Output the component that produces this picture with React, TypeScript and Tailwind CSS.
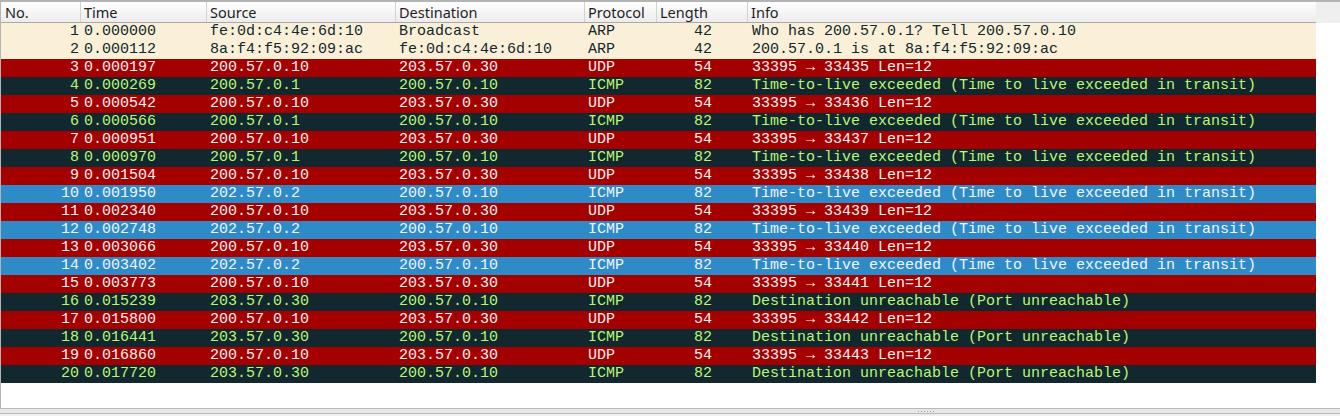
import React from "react";

type Kind = "arp" | "udp" | "icmp" | "blue";

const rowStyles: Record<Kind, string> = {
  arp: "bg-[#faf0d7] text-[#12272e]",
  udp: "bg-[#a40000] text-[#fff2f0]",
  icmp: "bg-[#12272e] text-[#b7f774]",
  blue: "bg-[#2f8bc7] text-[#f0f6ff]",
};

const TTL = "Time-to-live exceeded (Time to live exceeded in transit)";
const UNR = "Destination unreachable (Port unreachable)";

const rows: [number, string, string, string, string, number, string, Kind][] = [
  [1, "0.000000", "fe:0d:c4:4e:6d:10", "Broadcast", "ARP", 42, "Who has 200.57.0.1? Tell 200.57.0.10", "arp"],
  [2, "0.000112", "8a:f4:f5:92:09:ac", "fe:0d:c4:4e:6d:10", "ARP", 42, "200.57.0.1 is at 8a:f4:f5:92:09:ac", "arp"],
  [3, "0.000197", "200.57.0.10", "203.57.0.30", "UDP", 54, "33395 → 33435 Len=12", "udp"],
  [4, "0.000269", "200.57.0.1", "200.57.0.10", "ICMP", 82, TTL, "icmp"],
  [5, "0.000542", "200.57.0.10", "203.57.0.30", "UDP", 54, "33395 → 33436 Len=12", "udp"],
  [6, "0.000566", "200.57.0.1", "200.57.0.10", "ICMP", 82, TTL, "icmp"],
  [7, "0.000951", "200.57.0.10", "203.57.0.30", "UDP", 54, "33395 → 33437 Len=12", "udp"],
  [8, "0.000970", "200.57.0.1", "200.57.0.10", "ICMP", 82, TTL, "icmp"],
  [9, "0.001504", "200.57.0.10", "203.57.0.30", "UDP", 54, "33395 → 33438 Len=12", "udp"],
  [10, "0.001950", "202.57.0.2", "200.57.0.10", "ICMP", 82, TTL, "blue"],
  [11, "0.002340", "200.57.0.10", "203.57.0.30", "UDP", 54, "33395 → 33439 Len=12", "udp"],
  [12, "0.002748", "202.57.0.2", "200.57.0.10", "ICMP", 82, TTL, "blue"],
  [13, "0.003066", "200.57.0.10", "203.57.0.30", "UDP", 54, "33395 → 33440 Len=12", "udp"],
  [14, "0.003402", "202.57.0.2", "200.57.0.10", "ICMP", 82, TTL, "blue"],
  [15, "0.003773", "200.57.0.10", "203.57.0.30", "UDP", 54, "33395 → 33441 Len=12", "udp"],
  [16, "0.015239", "203.57.0.30", "200.57.0.10", "ICMP", 82, UNR, "icmp"],
  [17, "0.015800", "200.57.0.10", "203.57.0.30", "UDP", 54, "33395 → 33442 Len=12", "udp"],
  [18, "0.016441", "203.57.0.30", "200.57.0.10", "ICMP", 82, UNR, "icmp"],
  [19, "0.016860", "200.57.0.10", "203.57.0.30", "UDP", 54, "33395 → 33443 Len=12", "udp"],
  [20, "0.017720", "203.57.0.30", "200.57.0.10", "ICMP", 82, UNR, "icmp"],
];

const headers: [string, string][] = [
  ["No.", "w-[80px] pl-[4px]"],
  ["Time", "w-[126px] pl-[3px]"],
  ["Source", "w-[189px] pl-[3px]"],
  ["Destination", "w-[189px] pl-[3px]"],
  ["Protocol", "w-[72px] pl-[3px]"],
  ["Length", "w-[91px] pl-[3px]"],
  ["Info", "w-[568px] pl-[3px]"],
];

export default function App() {
  return (
    <div className="w-[1340px] h-[416px] flex flex-col bg-white overflow-hidden">
      <div className="h-[2px] bg-[#b4b4b4]" />
      <div className="flex-1 flex flex-col border-l border-[#b4b4b4]">
        <div className="flex h-[21px]">
          <div
            className="flex w-[1315px] border-b border-[#a9a9a9] bg-gradient-to-b from-[#ffffff] to-[#ececec] text-[#1e1e1e] text-[14.5px] leading-[21px]"
            style={{ fontFamily: '"Noto Sans", "Open Sans", sans-serif' }}
          >
            {headers.map(([t, c]) => (
              <div key={t} className={`${c} shrink-0 border-r border-[#d2d2d2] last:border-r-0 whitespace-nowrap`}>
                {t}
              </div>
            ))}
          </div>
          <div className="flex-1 bg-[#efefef]" />
        </div>
        <div
          className="flex flex-col w-[1315px] text-[15px] leading-[18px]"
          style={{ fontFamily: '"Liberation Mono", "DejaVu Sans Mono", monospace' }}
        >
          {rows.map(([no, time, src, dst, proto, len, info, kind]) => (
            <div key={no} className={`flex h-[18px] whitespace-pre ${rowStyles[kind]}`}>
              <div className="w-[80px] shrink-0 text-right pr-[2px]">{no}</div>
              <div className="w-[126px] shrink-0 pl-[3px]">{time}</div>
              <div className="w-[189px] shrink-0 pl-[3px]">{src}</div>
              <div className="w-[189px] shrink-0 pl-[3px]">{dst}</div>
              <div className="w-[72px] shrink-0 pl-[3px]">{proto}</div>
              <div className="w-[91px] shrink-0 text-right pr-[36px]">{len}</div>
              <div className="flex-1 pl-[4px]">{info}</div>
            </div>
          ))}
        </div>
        <div className="flex-1" />
      </div>
      <div className="h-[1px] bg-[#b8b8b8]" />
      <div className="h-[4px] bg-[#e8e8e8] flex items-center">
        <div className="flex gap-[2px] ml-[918px]">
          {[0, 1, 2, 3, 4, 5].map((i) => (
            <div key={i} className="w-[1px] h-[1px] bg-[#9a9a9a]" />
          ))}
        </div>
      </div>
      <div className="h-[1px] bg-[#b8b8b8]" />
      <div className="h-[2px] bg-[#efefef]" />
    </div>
  );
}
